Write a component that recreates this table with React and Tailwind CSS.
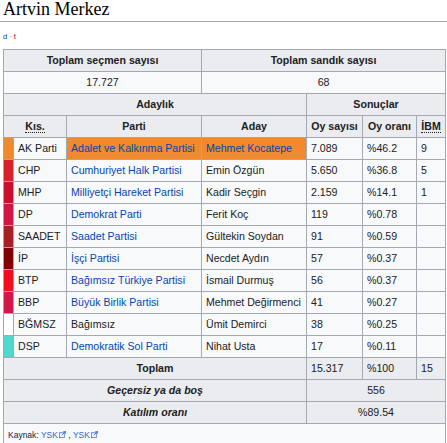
import React from "react";

const rows = [
  { c: "#f08a2c", k: "AK Parti", p: "Adalet ve Kalkınma Partisi", pl: true, a: "Mehmet Kocatepe", al: true, hl: true, v: "7.089", r: "%46.2", i: "9" },
  { c: "#d6232a", k: "CHP", p: "Cumhuriyet Halk Partisi", pl: true, a: "Emin Özgün", v: "5.650", r: "%36.8", i: "5" },
  { c: "#c8102e", k: "MHP", p: "Milliyetçi Hareket Partisi", pl: true, a: "Kadir Seçgin", v: "2.159", r: "%14.1", i: "1" },
  { c: "#d01643", k: "DP", p: "Demokrat Parti", pl: true, a: "Ferit Koç", v: "119", r: "%0.78", i: "" },
  { c: "#a62126", k: "SAADET", p: "Saadet Partisi", pl: true, a: "Gültekin Soydan", v: "91", r: "%0.59", i: "" },
  { c: "#800000", k: "İP", p: "İşçi Partisi", pl: true, a: "Necdet Aydın", v: "57", r: "%0.37", i: "" },
  { c: "#f20d1e", k: "BTP", p: "Bağımsız Türkiye Partisi", pl: true, a: "İsmail Durmuş", v: "56", r: "%0.37", i: "" },
  { c: "#d11849", k: "BBP", p: "Büyük Birlik Partisi", pl: true, a: "Mehmet Değirmenci", v: "41", r: "%0.27", i: "" },
  { c: "#ffffff", k: "BĞMSZ", p: "Bağımsız", pl: false, a: "Ümit Demirci", v: "38", r: "%0.25", i: "" },
  { c: "#4fd8cc", k: "DSP", p: "Demokratik Sol Parti", pl: true, a: "Nihat Usta", v: "17", r: "%0.11", i: "" },
];

const B = "border border-[#a2a9b1]";
const TH = `${B} bg-[#eaecf0] font-bold text-center h-[22px] p-0`;
const TD = `${B} h-[22px] py-0 px-1`;

function Ext() {
  return (
    <svg width="7" height="7" viewBox="0 0 10 10" className="inline-block ml-[1px] align-[0px]">
      <rect x="0.5" y="2.5" width="7" height="7" fill="none" stroke="#36c" strokeWidth="1" />
      <path d="M4 6 L9.5 0.5 M6 0.5 H9.5 V4" fill="none" stroke="#36c" strokeWidth="1.2" />
    </svg>
  );
}

export default function App() {
  return (
    <div className="w-[447px] h-[443px] overflow-hidden bg-white text-[#202122]" style={{ fontFamily: '"Liberation Sans", Arial, sans-serif' }}>
      <div className="h-[22px] border-b border-[#a2a9b1] pl-[3px] pt-0">
        <div className="text-[18px] leading-[18px] text-black" style={{ fontFamily: '"Liberation Serif", "Times New Roman", serif' }}>
          Artvin Merkez
        </div>
      </div>
      <div className="pl-[3px] mt-[11px] text-[7.5px] leading-[8px] h-[8px]">
        <span className="text-[#0645ad]">d</span>
        <span className="text-[#54595d]"> · </span>
        <span className="text-[#ba0000]">t</span>
      </div>
      <table className="ml-[3px] mt-[8px] border-collapse table-fixed w-[442px] bg-[#f8f9fa] text-[10.6px] leading-[13px]">
        <colgroup>
          <col className="w-[10px]" />
          <col className="w-[53px]" />
          <col className="w-[135px]" />
          <col className="w-[105px]" />
          <col className="w-[56px]" />
          <col className="w-[54px]" />
          <col className="w-[29px]" />
        </colgroup>
        <tbody>
          <tr>
            <th colSpan={3} className={TH}>Toplam seçmen sayısı</th>
            <th colSpan={4} className={TH}>Toplam sandık sayısı</th>
          </tr>
          <tr>
            <td colSpan={3} className={`${TD} text-center`}>17.727</td>
            <td colSpan={4} className={`${TD} text-center`}>68</td>
          </tr>
          <tr>
            <th colSpan={4} className={TH}>Adaylık</th>
            <th colSpan={3} className={TH}>Sonuçlar</th>
          </tr>
          <tr>
            <th colSpan={2} className={TH}>
              <span className="border-b border-dotted border-[#202122]">Kıs.</span>
            </th>
            <th className={TH}>Parti</th>
            <th className={TH}>Aday</th>
            <th className={TH}>Oy sayısı</th>
            <th className={TH}>Oy oranı</th>
            <th className={TH}>
              <span className="border-b border-dotted border-[#202122]">İBM</span>
            </th>
          </tr>
          {rows.map((r) => (
            <tr key={r.k}>
              <td className={`${B} h-[22px] p-0`} style={{ backgroundColor: r.c }}></td>
              <td className={`${TD} whitespace-nowrap`}>{r.k}</td>
              <td className={`${TD} whitespace-nowrap ${r.pl ? "text-[#0645ad]" : ""}`} style={r.hl ? { backgroundColor: r.c } : undefined}>
                {r.p}
              </td>
              <td className={`${TD} whitespace-nowrap ${r.al ? "text-[#0645ad]" : ""}`} style={r.hl ? { backgroundColor: r.c } : undefined}>
                {r.a}
              </td>
              <td className={TD}>{r.v}</td>
              <td className={TD}>{r.r}</td>
              <td className={TD}>{r.i}</td>
            </tr>
          ))}
          <tr>
            <th colSpan={4} className={TH}>Toplam</th>
            <td className={`${TD} bg-[#eaecf0]`}>15.317</td>
            <td className={`${TD} bg-[#eaecf0]`}>%100</td>
            <td className={`${TD} bg-[#eaecf0]`}>15</td>
          </tr>
          <tr>
            <th colSpan={4} className={`${TH} italic`}>Geçersiz ya da boş</th>
            <td colSpan={3} className={`${TD} bg-[#eaecf0] text-center`}>556</td>
          </tr>
          <tr>
            <th colSpan={4} className={`${TH} italic`}>Katılım oranı</th>
            <td colSpan={3} className={`${TD} bg-[#eaecf0] text-center`}>%89.54</td>
          </tr>
          <tr>
            <td colSpan={7} className={`${B} h-[24px] py-0 px-1 text-[8.5px]`}>
              Kaynak: <span className="text-[#36c]">YSK</span>
              <Ext /> , <span className="text-[#36c]">YSK</span>
              <Ext />
            </td>
          </tr>
        </tbody>
      </table>
    </div>
  );
}
